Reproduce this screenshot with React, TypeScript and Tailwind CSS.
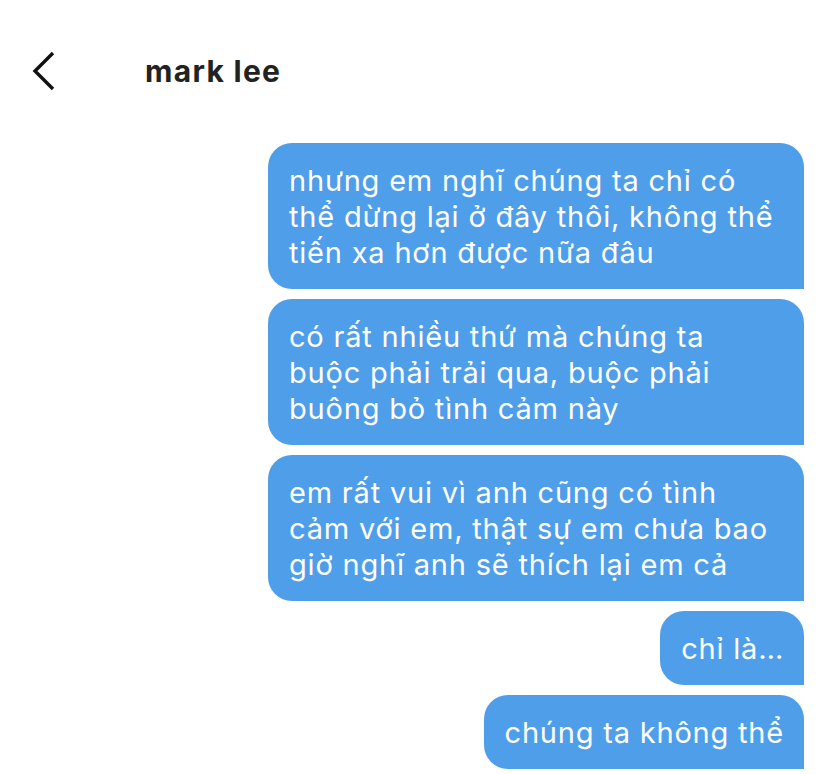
const messages = [
	"nhưng em nghĩ chúng ta chỉ có thể dừng lại ở đây thôi, không thể tiến xa hơn được nữa đâu",
	"có rất nhiều thứ mà chúng ta buộc phải trải qua, buộc phải buông bỏ tình cảm này",
	"em rất vui vì anh cũng có tình cảm với em, thật sự em chưa bao giờ nghĩ anh sẽ thích lại em cả",
	"chỉ là…",
	"chúng ta không thể",
];

export default function App() {
	return (
		<div className="w-[827px] h-[774px] bg-white overflow-hidden font-['Inter',sans-serif]">
			{/* Header */}
			<div className="h-[142px] flex items-start pt-[50px]">
				<button type="button" className="ml-[31px] w-[26px] h-[42px] flex items-center justify-center" aria-label="Back">
					<svg width="26" height="42" viewBox="0 0 26 42" fill="none">
						<path d="M22 3 L4 21 L22 39" stroke="#111" strokeWidth="3.4" strokeLinecap="butt" strokeLinejoin="miter" />
					</svg>
				</button>
				<h1 className="ml-[88px] mt-[2px] text-[30px] leading-[38px] font-bold text-[#222] tracking-[1.3px]">mark lee</h1>
			</div>

			{/* Messages */}
			<div className="flex flex-col items-end gap-[10px] pr-[23px] mt-px">
				{messages.map((m) => (
					<div
						key={m}
						className="max-w-[536px] bg-[#4f9ee9] text-white text-[29px] leading-[36px] tracking-[0.8px] pl-[21px] pr-[20px] pt-[20px] pb-[18px] rounded-[24px] rounded-br-none"
					>
						{m}
					</div>
				))}
			</div>
		</div>
	);
}
